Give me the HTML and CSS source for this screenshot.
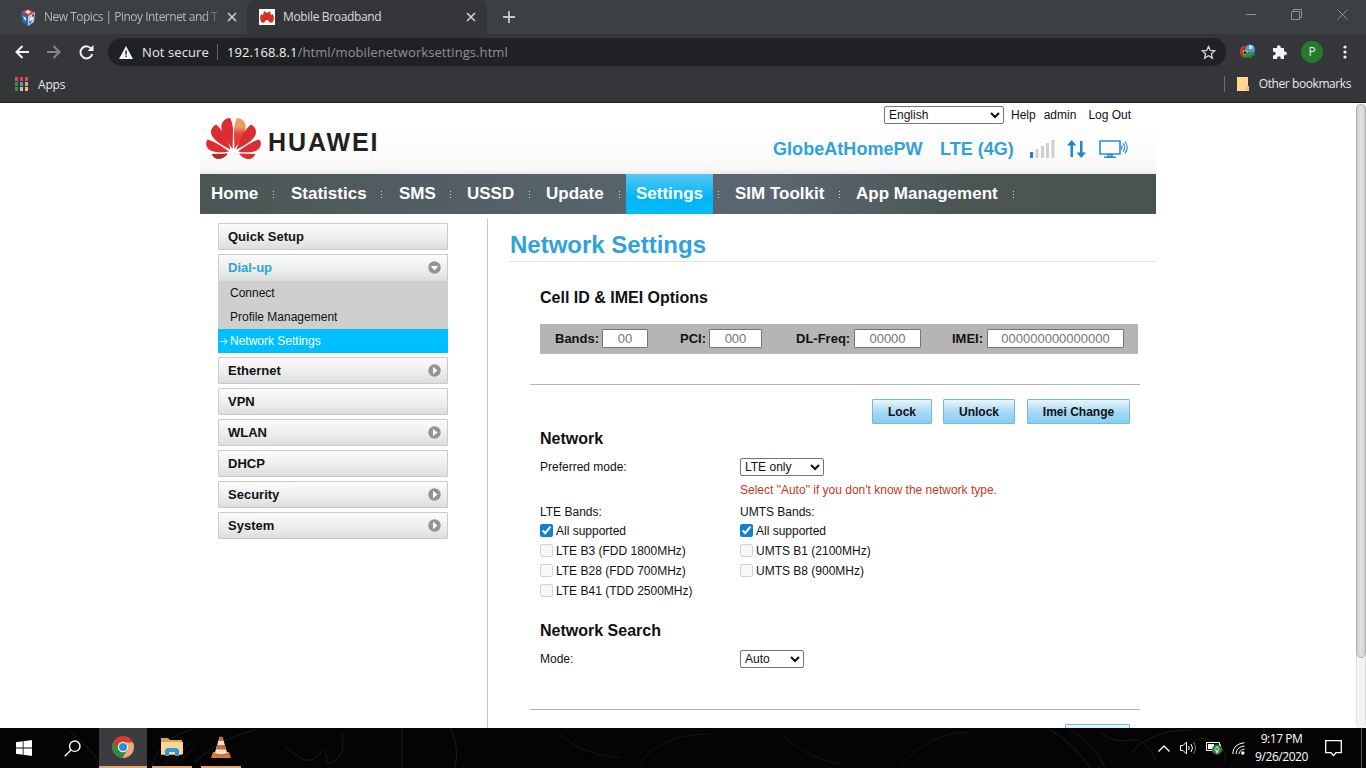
FILE: index.html
```html
<!DOCTYPE html>
<html lang="en">
<head>
    <meta charset="UTF-8">
    <meta name="viewport" content="width=device-width, initial-scale=1.0">
    <title>Mobile Broadband</title>
    <link rel="stylesheet" href="styles.css">
</head>
<body>
    <!-- Browser tabs -->
    <div class="tab-strip">
        <div class="tab">
            <svg class="favicon" width="18" height="17" viewBox="0 0 18 17">
                <path d="M2 3l7-3 7 3-7 4z" fill="#d9392f"/>
                <path d="M2 3l7 4v10l-6-4z" fill="#2a66b0"/>
                <path d="M16 3L9 7v10l6-4z" fill="#b9c9dc"/>
                <path d="M6 3l3-2 3 2-3 2zM4 7l3 2v3l-2-2zM11 10l3-3v3l-3 3z" fill="#e9eef5"/>
                <path d="M13 6l2-1v2l-2 1zM10 13l3-2-2 4z" fill="#1d4f94"/>
            </svg>
            <span class="tab-title tab-title-faded">New Topics | Pinoy Internet and T</span>
            <svg class="tab-close" width="10" height="10" viewBox="0 0 10 10"><path d="M1 1l8 8M9 1L1 9"/></svg>
        </div>
        <div class="tab active">
            <svg class="favicon" width="16" height="16" viewBox="0 0 16 16">
                <rect width="16" height="16" fill="#fff"/>
                <path d="M1 9l1-4 2 1 1-4 3 2 3-2 1 4 2-1 1 4-1 4-3 1-2-3H7l-2 3-3-1z" fill="#e02a26"/>
            </svg>
            <span class="tab-title">Mobile Broadband</span>
            <svg class="tab-close" width="10" height="10" viewBox="0 0 10 10"><path d="M1 1l8 8M9 1L1 9"/></svg>
        </div>
        <svg class="new-tab" width="12" height="12" viewBox="0 0 12 12"><path d="M6 0v12M0 6h12"/></svg>
        <div class="window-buttons">
            <svg width="10" height="10" viewBox="0 0 10 10"><path d="M0 5.500h10"/></svg>
            <svg width="11" height="11" viewBox="0 0 11 11"><path d="M.5 2.500h8v8h-8zM2.500 2.500v-2h8v8h-2"/></svg>
            <svg width="11" height="11" viewBox="0 0 11 11"><path d="M.5.5l10 10M10.500.5l-10 10"/></svg>
        </div>
    </div>

    <!-- Address bar -->
    <div class="toolbar">
        <div class="toolbar-nav">
            <svg width="14" height="14" viewBox="0 0 14 14" stroke="#f1f3f4"><path d="M14 7H1.500M7.500 1L1.500 7l6 6"/></svg>
            <svg width="14" height="14" viewBox="0 0 14 14" stroke="#85878a"><path d="M0 7h12.500M6.500 1l6 6-6 6"/></svg>
            <svg width="15" height="15" viewBox="0 0 15 15" stroke="#f1f3f4"><path d="M12.500 4A6 6 0 1 0 13.300 9"/><path d="M14.500 0v6h-6z" fill="#f1f3f4" stroke="none"/></svg>
        </div>
        <div class="omnibox">
            <svg width="14" height="13" viewBox="0 0 14 13"><path d="M7 0l7 13H0z" fill="#f1f3f4"/><path d="M6.300 4.500h1.500v4H6.300zM6.300 9.500h1.500V11H6.300z" fill="#202124"/></svg>
            <span class="not-secure">Not secure</span>
            <span class="url"><b>192.168.8.1</b>/html/mobilenetworksettings.html</span>
            <svg class="star" width="15" height="15" viewBox="0 0 15 15"><path d="M7.500 1.500l1.800 4 4.400.4-3.300 2.900 1 4.300-3.900-2.300-3.900 2.300 1-4.300L1.300 5.900l4.400-.4z"/></svg>
        </div>
        <svg class="ext" width="17" height="16" viewBox="0 0 17 16">
            <circle cx="11" cy="5.500" r="5" fill="#4c9bd0"/>
            <path d="M10 1l4 1-1 3-3 0z" fill="#cfe6f2"/>
            <path d="M1 8l9 0 6 1-1 3-2-1-1 3-3-1-3 1-4-2z" fill="#2f8b3c"/>
            <path d="M1 9q-1-5 3-7l3 0-3 4 1 5-2 1z" fill="#c6392c"/>
            <path d="M4 6l5 1-1 3-3 1z" fill="#e4c53e"/>
            <path d="M5 7l3 1-1 2-2 0z" fill="#26292b"/>
        </svg>
        <svg class="puzzle" width="15" height="15" viewBox="0 0 15 15"><path d="M1 3h4V2a1.800 1.800 0 0 1 3.700 0v1H12v3.500h1a1.800 1.800 0 0 1 0 3.700h-1V14H8.700v-1a1.700 1.700 0 0 0-3.500 0v1H1v-3.800h1a1.700 1.700 0 0 0 0-3.400H1z" fill="#f1f3f4"/></svg>
        <span class="avatar">P</span>
        <svg class="menu-dots" width="4" height="14" viewBox="0 0 4 14" fill="#f1f3f4"><circle cx="2" cy="2" r="1.600"/><circle cx="2" cy="7" r="1.600"/><circle cx="2" cy="12" r="1.600"/></svg>
    </div>

    <div class="bookmarks">
        <svg width="13" height="14" viewBox="0 0 13 14">
            <path d="M0 0h3v4H0zM5 0h3v4H5zM10 0h3v4h-3z" fill="#d6485a"/>
            <path d="M0 5h3v4H0z" fill="#3c8d41"/><path d="M5 5h3v4H5z" fill="#3f9be0"/><path d="M10 5h3v4h-3z" fill="#e0a070"/>
            <path d="M0 10h3v4H0z" fill="#3c8d41"/><path d="M5 10h3v4H5zM10 10h3v4h-3z" fill="#e8b98c"/>
        </svg>
        <span>Apps</span>
        <div class="other-bookmarks">
            <svg width="12" height="14" viewBox="0 0 12 14"><path d="M0 0h11v9h1v5H0z" fill="#fbd78f"/><path d="M9.500 9.500h2v4h-2z" fill="#e9b66a"/></svg>
            <span>Other bookmarks</span>
        </div>
    </div>

    <!-- Router admin page -->
    <div class="viewport">
        <div class="page">
            <div class="header">
                <div class="logo">
                    <svg width="55" height="42" viewBox="0 0 55 42">
                        <defs>
                            <linearGradient id="petal" x1="0" y1="0" x2="0" y2="1"><stop offset="0" stop-color="#e5a468"/><stop offset=".3" stop-color="#e59a62"/><stop offset=".5" stop-color="#e2453b"/><stop offset="1" stop-color="#dd2f34"/></linearGradient>
                        </defs>
                        <g fill="#dc2d33">
                            <path d="M26.600 31C20 22 13 12 16 5q3-5 8-5 3 5 3 14z"/>
                            <path d="M28.400 31C35 22 42 12 39 5q-3-5-8-5-3 5-3 14z" fill="url(#petal)"/>
                            <path d="M24.500 31.500C13 26 5 20 5 14q0-5 5-7.500C17 12 22 22 24.500 31.500z"/>
                            <path d="M30.500 31.500C42 26 50 20 50 14q0-5-5-7.500C38 12 33 22 30.500 31.500z"/>
                            <path d="M23 33.500C13 35.500 3 34 1 29q-2-4 .5-7.500C8 23 17 29 23 33.500z"/>
                            <path d="M32 33.500c10 2 20 .5 22-4.500q2-4-.5-7.500C47 23 38 29 32 33.500z"/>
                            <path d="M22 35.500q-4 5.500-10 5.500-4 0-6.500-5z" fill="#b02a2c"/>
                            <path d="M33 35.500q4 5.500 10 5.500 4 0 6.500-5z"/>
                        </g>
                    </svg>
                    <span>HUAWEI</span>
                </div>
                <div class="header-right">
                    <div class="user-links">
                        <select class="language"><option>English</option></select>
                        <span class="help">Help</span>
                        <span class="admin">admin</span>
                        <span>Log Out</span>
                    </div>
                    <div class="status">
                        <span class="operator">GlobeAtHomePW</span>
                        <span class="network-type">LTE (4G)</span>
                        <svg class="signal" width="25" height="18" viewBox="0 0 25 18" fill="#cfcfcf">
                            <rect x="0" y="12" width="3" height="6" fill="#1d82cc"/><rect x="5.500" y="9" width="3" height="9"/><rect x="11" y="6" width="3" height="12"/><rect x="16" y="3" width="3" height="15"/><rect x="21.500" y="0" width="3" height="18"/>
                        </svg>
                        <svg class="traffic" width="19" height="18" viewBox="0 0 19 18" fill="#1d86cc"><path d="M3.500 17V5.500H0L4.700 0l4.700 5.500H6v11.500zM13 1v11.500H9.600l4.700 5.500 4.700-5.500h-3.500V1z"/></svg>
                        <svg width="29" height="19" viewBox="0 0 29 19" fill="none" stroke="#2a8fd2">
                            <path d="M1 1h20v13H1z" stroke-width="1.600"/><path d="M9 14.500h4v2H9zM5 17.300h12" stroke-width="1.400"/><path d="M22 5.500q2 2 0 4M24 3.500q3.500 4 0 8M26 1.500q4.500 6 0 12" stroke-width="1.200"/>
                        </svg>
                    </div>
                </div>
            </div>

            <div class="main-nav">
                <span class="nav-item home">Home</span>
                <span class="nav-item statistics">Statistics</span>
                <span class="nav-item sms">SMS</span>
                <span class="nav-item ussd">USSD</span>
                <span class="nav-item update">Update</span>
                <span class="nav-item selected">Settings</span>
                <span class="nav-item sim">SIM Toolkit</span>
                <span class="nav-item apps">App Management</span>
            </div>

            <div class="columns">
                <div class="sidebar">
                    <div class="menu-item">Quick Setup</div>
                    <div class="menu-group">
                        <div class="menu-item open">Dial-up
                            <svg width="13" height="13" viewBox="0 0 13 13"><circle cx="6.500" cy="6.500" r="6.200" fill="#949494"/><path d="M2.700 5h7.600L6.500 9.500z" fill="#fff"/></svg>
                        </div>
                        <div class="submenu">
                            <div>Connect</div>
                            <div>Profile Management</div>
                            <div class="current"><svg width="8" height="7" viewBox="0 0 8 7"><path d="M0 3.500h7M4 .5l3 3-3 3"/></svg>Network Settings</div>
                        </div>
                    </div>
                    <div class="menu-item">Ethernet
                        <svg width="13" height="13" viewBox="0 0 13 13"><circle cx="6.500" cy="6.500" r="6.200" fill="#949494"/><path d="M5 2.700v7.600l4.500-3.800z" fill="#fff"/></svg>
                    </div>
                    <div class="menu-item">VPN</div>
                    <div class="menu-item">WLAN
                        <svg width="13" height="13" viewBox="0 0 13 13"><circle cx="6.500" cy="6.500" r="6.200" fill="#949494"/><path d="M5 2.700v7.600l4.500-3.800z" fill="#fff"/></svg>
                    </div>
                    <div class="menu-item">DHCP</div>
                    <div class="menu-item">Security
                        <svg width="13" height="13" viewBox="0 0 13 13"><circle cx="6.500" cy="6.500" r="6.200" fill="#949494"/><path d="M5 2.700v7.600l4.500-3.800z" fill="#fff"/></svg>
                    </div>
                    <div class="menu-item">System
                        <svg width="13" height="13" viewBox="0 0 13 13"><circle cx="6.500" cy="6.500" r="6.200" fill="#949494"/><path d="M5 2.700v7.600l4.500-3.800z" fill="#fff"/></svg>
                    </div>
                </div>

                <div class="content">
                    <h1>Network Settings</h1>
                    <div class="settings">
                        <h2>Cell ID &amp; IMEI Options</h2>
                        <div class="cell-bar">
                            <label class="bands">Bands: <input type="text" placeholder="00"></label>
                            <label class="pci">PCI: <input type="text" placeholder="000"></label>
                            <label class="freq">DL-Freq: <input type="text" placeholder="00000"></label>
                            <label class="imei">IMEI: <input type="text" placeholder="000000000000000"></label>
                        </div>
                        <div class="actions">
                            <button class="lock">Lock</button>
                            <button class="unlock">Unlock</button>
                            <button class="imei-change">Imei Change</button>
                        </div>
                        <h2>Network</h2>
                        <div class="row">
                            <span class="label">Preferred mode:</span>
                            <select class="preferred-mode"><option>LTE only</option></select>
                        </div>
                        <p class="hint">Select "Auto" if you don't know the network type.</p>
                        <div class="band-lists">
                            <div class="band-list">
                                <p>LTE Bands:</p>
                                <label><input type="checkbox" checked>All supported</label>
                                <label><input type="checkbox" disabled>LTE B3 (FDD 1800MHz)</label>
                                <label><input type="checkbox" disabled>LTE B28 (FDD 700MHz)</label>
                                <label><input type="checkbox" disabled>LTE B41 (TDD 2500MHz)</label>
                            </div>
                            <div class="band-list">
                                <p>UMTS Bands:</p>
                                <label><input type="checkbox" checked>All supported</label>
                                <label><input type="checkbox" disabled>UMTS B1 (2100MHz)</label>
                                <label><input type="checkbox" disabled>UMTS B8 (900MHz)</label>
                            </div>
                        </div>
                        <h2>Network Search</h2>
                        <div class="row">
                            <span class="label">Mode:</span>
                            <select class="search-mode"><option>Auto</option></select>
                        </div>
                        <div class="apply-row"><button class="apply"></button></div>
                    </div>
                </div>
            </div>
        </div>
        <div class="scrollbar"><div class="thumb"></div></div>
    </div>

    <!-- Windows taskbar -->
    <div class="taskbar">
        <svg class="pattern" width="1366" height="40" viewBox="0 0 1366 40" fill="none" stroke="#1c1c1c">
            <path d="M70 4q18 12 30 32M152 38q10-30 40-36M195 34q22-22 60-32M285 18q22 22 32 10t10 8q20-4 15-32M402 0v40M450 0q10 20 5 40"/>
            <path d="M1050 2q25 14 40 38M1070 2q25 14 35 38M1100 4q15 12 30 8t26 20M1130 26q20-24 60-24M1190 20q8-16 24-6t10 20"/>
            <path d="M165 36l20-24M172 36l20-24M179 36l20-24M560 6q20 20 60 24M640 36q20-30 70-30M780 6q30 26 60 30M900 38q30-34 70-34" stroke="#161616"/>
        </svg>
        <div class="task start"><svg width="16" height="16" viewBox="0 0 16 16" fill="#fff"><path d="M0 2.200l6.700-.9v6.300H0zM7.500 1.200L16 0v7.600H7.500zM0 8.400h6.700v6.300L0 13.800zM7.500 8.400H16V16l-8.500-1.200z"/></svg></div>
        <div class="task search"><svg width="17" height="17" viewBox="0 0 17 17" fill="none" stroke="#fff" stroke-width="1.400"><circle cx="10.800" cy="6.200" r="5.200"/><path d="M7 10L.7 16.300"/></svg></div>
        <div class="task chrome running">
            <svg width="22" height="22" viewBox="0 0 22 22">
                <circle cx="11" cy="11" r="11" fill="#d93a30"/>
                <path d="M1.500 5.500A11 11 0 0 0 10.500 22l4.800-8.500H11L6.700 13.500z" fill="#2c8d43"/>
                <path d="M21 6.500A11 11 0 0 1 10.500 22l5-8.500q1.500-4-1.500-7z" fill="#e9ac72"/>
                <circle cx="11" cy="11" r="5.200" fill="#f0f4f8"/><circle cx="11" cy="11" r="4" fill="#2791d8"/>
            </svg>
        </div>
        <div class="task explorer running">
            <svg width="22" height="18" viewBox="0 0 22 18">
                <path d="M0 0h7l2 2h12v15H0z" fill="#dca45d"/><path d="M0 4h22v12H0z" fill="#f9d896"/>
                <path d="M4 18v-6l2-2h10l2 2v6h-4v-4H8v4z" fill="#3295d8"/>
            </svg>
        </div>
        <div class="task vlc running">
            <svg width="20" height="23" viewBox="0 0 20 23">
                <path d="M2 16h16l2 6H0z" fill="#d87a35"/><path d="M8.500 1h3l5 17q-6.500 3-13 0z" fill="#e8e4e0"/>
                <path d="M8.500 1q1.500-1 3 0l1 4h-5zM6.200 9h7.600l1.300 4.500H4.900z" fill="#d0692a"/><path d="M4 17q6 2.500 12 0l.6 2q-6.600 2-13.200 0z" fill="#d0692a"/>
            </svg>
        </div>
        <div class="tray">
            <svg width="12" height="7" viewBox="0 0 12 7"><path d="M.5 6.500L6 1l5.500 5.500" stroke-width="1.400"/></svg>
            <svg class="volume" width="16" height="14" viewBox="0 0 16 14"><path d="M.5 4.500h2.500l3.500-3.500v12L3 9.500H.5zM8.500 5q1.500 2 0 4M11 3q3 4 0 8"/><path d="M13.500 1q4 6 0 12" stroke="#777"/></svg>
            <svg class="battery" width="17" height="14" viewBox="0 0 17 14"><path d="M.5 1.500h13v8H.5z"/><path d="M2 3h6v5H2zM14 3.500h1v3h-1z" fill="#fff" stroke="none"/><circle cx="11" cy="8.500" r="5" fill="#2d8540" stroke="none"/><path d="M11 5.500l2 3-2 3-2-3zM11 8.500v4" stroke-width=".8"/></svg>
            <svg class="wifi" width="13" height="13" viewBox="0 0 13 13"><path d="M.7 12Q1 2 12.500.7M4 12Q4.300 5 12.500 4M7 12Q7.300 8 12.500 7"/><circle cx="10.800" cy="11" r="1.700" fill="#fff" stroke="none"/></svg>
            <div class="clock"><span>9:17 PM</span><span>9/26/2020</span></div>
            <svg class="notifications" width="17" height="17" viewBox="0 0 17 17"><path d="M.7.7h15.600v12h-5.300L8.500 15.500 6 12.700H.7z" stroke-width="1.300"/></svg>
        </div>
        <div class="show-desktop"></div>
    </div>
</body>
</html>
```
FILE: styles.css
```css
* {
    box-sizing: border-box;
}

body {
    margin: 0;
    width: 1366px;
    height: 768px;
    overflow: hidden;
    font-family: "Liberation Sans", Arial, sans-serif;
    font-size: 12px;
    color: #111;
    background: #fff;
}

svg {
    display: block;
    flex: none;
}

/* Browser chrome */
.tab-strip,
.toolbar,
.bookmarks {
    display: flex;
    align-items: center;
    font-family: "Open Sans", "Noto Sans", sans-serif;
    color: #e8eaed;
    white-space: nowrap;
}

.tab-strip {
    height: 34px;
    background: #3c4042;
}

.tab {
    display: flex;
    align-items: center;
    width: 247px;
    height: 34px;
    padding: 0 10px 0 19px;
    font-size: 12px;
    color: #b4b7ba;
}

.tab.active {
    width: 240px;
    padding: 0 11px 0 12px;
    border-radius: 8px 8px 0 0;
    background: #35363a;
    color: #d8dadd;
}

.favicon {
    margin-right: 8px;
}

.tab:first-child .favicon {
    margin-right: 7px;
}

.tab-title {
    flex: 1;
    letter-spacing: -0.35px;
    line-height: 16px;
    margin-top: -1px;
}

.tab-title-faded {
    letter-spacing: -0.5px;
    -webkit-mask-image: linear-gradient(90deg, #000 88%, rgba(0, 0, 0, 0.2) 96%);
    mask-image: linear-gradient(90deg, #000 88%, rgba(0, 0, 0, 0.2) 96%);
}

.tab-close {
    fill: none;
    stroke: #d0d2d4;
    stroke-width: 1.6;
}

.new-tab {
    margin-left: 16px;
    stroke: #c4c7ca;
    stroke-width: 1.8;
}

.window-buttons {
    display: flex;
    align-items: center;
    gap: 35px;
    margin: -6px 18px 0 auto;
    fill: none;
    stroke: #8d9092;
}

.toolbar {
    height: 36px;
    background: #35363a;
}

.toolbar-nav {
    display: flex;
    align-items: center;
    gap: 18px;
    width: 108px;
    padding-left: 15px;
    fill: none;
    stroke-width: 2;
}

.omnibox {
    display: flex;
    align-items: center;
    width: 1118px;
    height: 28px;
    padding: 0 10px 0 11px;
    border-radius: 14px;
    background: #202124;
    font-size: 13px;
}

.not-secure {
    width: 76px;
    margin: 0 9px 0 9px;
    border-right: 1px solid #5f6164;
    line-height: 16px;
    letter-spacing: 0.1px;
}

.url {
    color: #8f9194;
    letter-spacing: 0.08px;
}

.url b {
    font-weight: normal;
    color: #f1f3f4;
}

.star {
    margin-left: auto;
    fill: none;
    stroke: #d5d7da;
    stroke-width: 1.3;
}

.ext {
    margin-left: 13px;
}

.puzzle {
    margin-left: 16px;
}

.avatar {
    width: 22px;
    height: 22px;
    margin-left: 14px;
    border-radius: 50%;
    background: #267a2c;
    font-size: 12px;
    line-height: 22px;
    text-align: center;
}

.menu-dots {
    margin-left: 20px;
}

.bookmarks {
    height: 33px;
    padding: 0 15px 4px;
    border-bottom: 1px solid #1c1d1f;
    background: #35363a;
    font-size: 12px;
}

.bookmarks > span {
    margin-left: 10px;
    letter-spacing: -0.2px;
}

.other-bookmarks {
    display: flex;
    align-items: center;
    gap: 10px;
    margin-left: auto;
    padding-left: 12px;
    border-left: 1px solid #6a6b6e;
    line-height: 16px;
    letter-spacing: -0.42px;
}

/* Page */
.viewport {
    display: flex;
    height: 625px;
    padding-left: 200px;
    overflow: hidden;
}

.page {
    width: 956px;
}

.header {
    display: flex;
    justify-content: space-between;
    height: 71px;
    background: linear-gradient(#fff 25%, #fcfcfc 70%, #f9f9f9 92%, #ececec);
}

.logo {
    display: flex;
    padding: 15px 0 0 6px;
}

.logo span {
    margin: 9px 0 0 7px;
    font-size: 25px;
    font-weight: bold;
    line-height: 30px;
    letter-spacing: 1.9px;
    color: #231f20;
}

.header-right {
    display: flex;
    flex-direction: column;
    width: 383px;
}

.user-links {
    display: flex;
    align-items: center;
    height: 24px;
    padding-left: 111px;
}

select {
    height: 18px;
    padding: 0;
    border: 1px solid #767676;
    border-radius: 2px;
    background: #fff;
    color: #111;
    font-family: "Liberation Sans", Arial, sans-serif;
    font-size: 12px;
}

.language {
    width: 120px;
}

.help {
    margin-left: 7px;
}

.admin {
    margin: 0 12px 0 8px;
}

.status {
    display: flex;
    align-items: center;
    height: 44px;
    font-size: 18px;
    font-weight: bold;
    color: #2fa3d8;
    white-space: nowrap;
}

.operator {
    width: 167px;
    letter-spacing: 0.05px;
}

.network-type {
    width: 90px;
}

.signal {
    margin-right: 12px;
}

.traffic {
    margin-right: 13px;
}

.main-nav {
    display: flex;
    height: 40px;
    background: linear-gradient(90deg, #4a5554 0%, #566269 35%, #5b6770 60%, #4a5554 80%, #485352 100%);
    color: #fff;
    font-size: 17px;
    font-weight: bold;
    line-height: 39px;
    white-space: nowrap;
}

.nav-item {
    background: repeating-linear-gradient(#d5dadb 0 1px, transparent 1px 3px) right 0 top 17px / 1px 7px no-repeat;
}

.home { width: 74px; padding-left: 11px; }
.statistics { width: 108px; padding-left: 17px; }
.sms { width: 69px; padding-left: 17px; }
.ussd { width: 79px; padding-left: 16px; }
.update { width: 90px; padding-left: 16px; }
.sim { width: 122px; padding-left: 17px; }
.apps { width: 174px; padding-left: 16px; }

/* the last separator of the left block sits just after the selected tab */
.nav-item.selected {
    width: 87px;
    margin: 0 5px 0 6px;
    background: linear-gradient(#56c8f2, #00b4f5 60%, #00bdfd);
    text-align: center;
}

.nav-item.sim {
    background:
        repeating-linear-gradient(#d5dadb 0 1px, transparent 1px 3px) left 0 top 17px / 1px 7px no-repeat,
        repeating-linear-gradient(#d5dadb 0 1px, transparent 1px 3px) right 0 top 17px / 1px 7px no-repeat;
}

.columns {
    display: flex;
    padding-left: 18px;
}

.sidebar {
    display: flex;
    flex-direction: column;
    gap: 4px;
    width: 230px;
    padding-top: 9px;
}

.menu-item {
    display: flex;
    align-items: center;
    justify-content: space-between;
    height: 27px;
    padding: 0 6px 0 9px;
    border: 1px solid #cacaca;
    border-radius: 1px;
    background: linear-gradient(#fbfbfb, #ebecec 60%, #dcdddd);
    font-size: 13px;
    font-weight: bold;
}

.menu-item.open {
    border-bottom: 0;
    padding-bottom: 1px;
    color: #2fa3d8;
}

.submenu {
    background: #cfcfcf;
    line-height: 24px;
}

.submenu div {
    padding-left: 12px;
}

.submenu .current {
    display: flex;
    align-items: center;
    padding-left: 2px;
    background: #00bfff;
    color: #fff;
}

.current svg {
    margin-right: 2px;
    fill: none;
    stroke: #fff;
}

.content {
    width: 669px;
    height: 700px;
    margin: 4px 0 0 39px;
    padding-left: 22px;
    border-left: 1px solid #c8c8c8;
}

h1 {
    height: 44px;
    margin: 0 0 0 -1px;
    padding-left: 1px;
    border-bottom: 1px solid #e2e2e2;
    color: #2fa3d8;
    font-size: 24px;
    line-height: 54px;
}

.settings {
    width: 630px;
    padding-left: 30px;
}

h2 {
    margin: 0;
    font-size: 16px;
    line-height: 20px;
}

.settings h2:first-child {
    padding-top: 26px;
}

.cell-bar {
    display: flex;
    align-items: center;
    width: 598px;
    height: 30px;
    margin-top: 16px;
    padding: 0 0 1px 15px;
    background: #b5b5b5;
    font-size: 13px;
    font-weight: bold;
}

.cell-bar label {
    display: flex;
    align-items: center;
    justify-content: space-between;
}

.cell-bar input {
    height: 19px;
    padding: 0;
    border: 1px solid #767676;
    border-radius: 1px;
    background: #fff;
    font-family: "Liberation Sans", Arial, sans-serif;
    font-size: 13px;
    text-align: center;
}

.cell-bar input::placeholder {
    color: #757575;
}

.bands { width: 93px; margin-right: 32px; }
.bands input { width: 46px; }
.pci { width: 82px; margin-right: 34px; }
.pci input { width: 53px; }
.freq { width: 125px; margin-right: 31px; }
.freq input { width: 67px; }
.imei { width: 172px; }
.imei input { width: 137px; }

.actions {
    display: flex;
    justify-content: flex-end;
    width: 610px;
    margin: 30px 0 0 -10px;
    padding: 14px 10px 5px 0;
    border-top: 1px solid #b3b3b3;
}

button {
    height: 25px;
    padding: 0;
    border: 1px solid #6dbbdf;
    border-radius: 1px;
    background: linear-gradient(#eaf6fc, #a8daf5 50%, #87cdf3);
    color: #111;
    font-family: "Liberation Sans", Arial, sans-serif;
    font-size: 12px;
    font-weight: bold;
}

.lock { width: 60px; }
.unlock { width: 72px; margin: 0 12px 0 11px; }
.imei-change { width: 103px; }

.row {
    display: flex;
    align-items: center;
    height: 18px;
    margin-top: 9px;
}

.label {
    width: 200px;
}

.preferred-mode {
    width: 84px;
}

.search-mode {
    width: 64px;
}

.hint {
    margin: 7px 0 0 200px;
    color: #c8361d;
    line-height: 14px;
}

.band-lists {
    display: flex;
    height: 116px;
    margin-top: 8px;
}

.band-list {
    width: 200px;
}

.band-list p {
    margin: 0;
    line-height: 14px;
}

.band-list label {
    display: flex;
    align-items: center;
    height: 20px;
    line-height: 14px;
    padding-top: 1px;
}

.band-list p + label {
    height: 18px;
    margin: 2px 0 1px;
}

.band-list input {
    width: 13px;
    height: 13px;
    margin: -1px 3px 0 0;
    accent-color: #127fd2;
}

.apply-row {
    display: flex;
    justify-content: flex-end;
    width: 610px;
    margin: 41px 0 0 -10px;
    padding: 14px 10px 0 0;
    border-top: 1px solid #b3b3b3;
}

.apply {
    width: 65px;
}

.scrollbar {
    width: 10px;
    margin-left: auto;
    padding-top: 1px;
    border: 1px solid #dedede;
    border-width: 0 1px;
    border-radius: 5px;
    background: #f3f3f3;
}

.thumb {
    height: 554px;
    margin: 0 -1px;
    border: 1px solid #b0b0b0;
    border-radius: 5px;
    background: linear-gradient(90deg, #cfcfcf, #e2e2e2 50%, #cfcfcf);
}

/* Taskbar */
.taskbar {
    position: relative;
    display: flex;
    height: 40px;
    background: #040404;
    color: #fff;
}

.pattern {
    position: absolute;
    left: 0;
    top: 0;
}

.task {
    position: relative;
    display: flex;
    align-items: center;
    justify-content: center;
    width: 40px;
    height: 40px;
}

.start { width: 48px; }
.search { width: 48px; }

.running {
    border-bottom: 2px solid #e5a36f;
}

.chrome {
    width: 48px;
    margin: 0 5px 0 3px;
    background: #3b3c40;
}

.vlc {
    margin-left: 9px;
}

.tray {
    position: relative;
    display: flex;
    align-items: center;
    margin-left: auto;
    padding-right: 19px;
    fill: none;
    stroke: #fff;
}

.volume { margin-left: 10px; }
.battery { margin-left: 10px; }
.wifi { margin-left: 9px; }

.clock {
    display: flex;
    flex-direction: column;
    align-items: center;
    width: 71px;
    margin: 0 8px 0 1px;
    font-family: "Open Sans", "Noto Sans", sans-serif;
    font-size: 12px;
    line-height: 18px;
    letter-spacing: -0.45px;
    stroke: none;
}

.show-desktop {
    width: 5px;
    border-left: 1px solid #5a5a5a;
}
```
